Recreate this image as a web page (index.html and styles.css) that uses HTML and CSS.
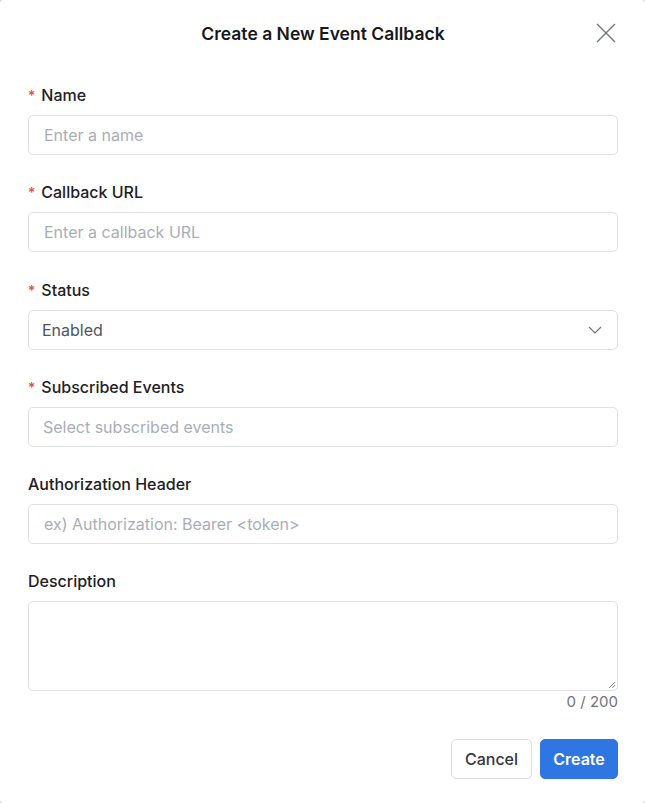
FILE: index.html
```html
<!DOCTYPE html>
<html lang="en">
<head>
<meta charset="utf-8">
<title>Create a New Event Callback</title>
<link rel="stylesheet" href="styles.css">
</head>
<body>
<div class="modal">
  <header class="modal-header">
    <span></span>
    <h1 class="title">Create a New Event Callback</h1>
    <button class="close" aria-label="Close">
      <svg width="20" height="20" viewBox="0 0 20 20"><path d="M1 1L19 19M19 1L1 19" stroke="#6f757e" stroke-width="1.4" fill="none"/></svg>
    </button>
  </header>
  <form class="form">
    <div class="field">
      <label class="label"><span class="req">*</span>Name</label>
      <div class="input placeholder">Enter a name</div>
    </div>
    <div class="field">
      <label class="label"><span class="req">*</span>Callback URL</label>
      <div class="input placeholder">Enter a callback URL</div>
    </div>
    <div class="field">
      <label class="label"><span class="req">*</span>Status</label>
      <div class="input select">
        <span class="value">Enabled</span>
        <svg width="14" height="8" viewBox="0 0 14 8"><path d="M1 1L7 7L13 1" stroke="#6f757e" stroke-width="1.2" fill="none"/></svg>
      </div>
    </div>
    <div class="field">
      <label class="label"><span class="req">*</span>Subscribed Events</label>
      <div class="input multi placeholder">Select subscribed events</div>
    </div>
    <div class="field">
      <label class="label">Authorization Header</label>
      <div class="input placeholder">ex) Authorization: Bearer &lt;token&gt;</div>
    </div>
    <div class="field last">
      <label class="label">Description</label>
      <div class="textarea">
        <svg class="grip" width="8" height="8" viewBox="0 0 8 8"><path d="M7 1L1 7M7 4L4 7" stroke="#8a8f96" stroke-width="1" fill="none"/></svg>
      </div>
      <div class="counter">0 / 200</div>
    </div>
  </form>
  <footer class="footer">
    <button class="btn btn-cancel" type="button">Cancel</button>
    <button class="btn btn-create" type="button">Create</button>
  </footer>
</div>
</body>
</html>
```
FILE: styles.css
```css
* { box-sizing: border-box; }
html, body { margin: 0; padding: 0; }
body {
  background: #d9d9d9;
  font-family: Inter, "Noto Sans", "Liberation Sans", sans-serif;
  color: #1d2025;
}
.modal {
  width: 645px;
  height: 803px;
  background: #fff;
  border-radius: 4px;
  padding: 0 27px 0 28px;
  display: flex;
  flex-direction: column;
}
.modal-header {
  height: 66px;
  display: grid;
  grid-template-columns: 1fr auto 1fr;
  align-items: center;
}
.title {
  margin: 0;
  font-size: 17.5px;
  font-weight: 600;
  color: #16181c;
  letter-spacing: 0;
}
.close {
  justify-self: end;
  margin-right: 2px;
  border: 0;
  background: none;
  padding: 0;
  width: 20px;
  height: 20px;
  display: flex;
}
.form {
  padding-top: 19px;
  display: flex;
  flex-direction: column;
  gap: 27.3px;
}
.field { display: flex; flex-direction: column; }
.label {
  height: 20px;
  font-size: 16px;
  line-height: 20px;
  font-weight: 500;
  color: #1d2025;
  margin-bottom: 10px;
  display: block;
}
.req {
  color: #ea4b3c;
  margin-right: 6px;
  font-size: 14px;
  line-height: 1;
}
.input {
  height: 40px;
  border: 1px solid #dfe1e5;
  border-radius: 5px;
  padding: 0 15px;
  display: flex;
  align-items: center;
  font-size: 16px;
}
.placeholder { color: #a9aeb6; }
.select {
  justify-content: space-between;
  padding: 0 15px 0 13px;
}
.select .value { color: #4e5460; }
.multi { padding-left: 14px; }
.textarea {
  height: 90px;
  border: 1px solid #dfe1e5;
  border-radius: 5px;
  position: relative;
}
.grip { position: absolute; right: 1px; bottom: 1px; }
.counter {
  align-self: flex-end;
  font-size: 15px;
  line-height: 22px;
  color: #6f757e;
}
.footer {
  margin-top: 26px;
  display: flex;
  justify-content: flex-end;
  gap: 8px;
}
.btn {
  height: 40px;
  border-radius: 5px;
  font-family: inherit;
  font-size: 16px;
  font-weight: 500;
  padding: 0;
  cursor: pointer;
}
.btn-cancel {
  width: 81px;
  background: #fff;
  border: 1px solid #dadde2;
  color: #33373d;
}
.btn-create {
  width: 78px;
  background: #2e76e2;
  border: 1px solid #2e76e2;
  color: #fff;
  font-weight: 600;
}
```
